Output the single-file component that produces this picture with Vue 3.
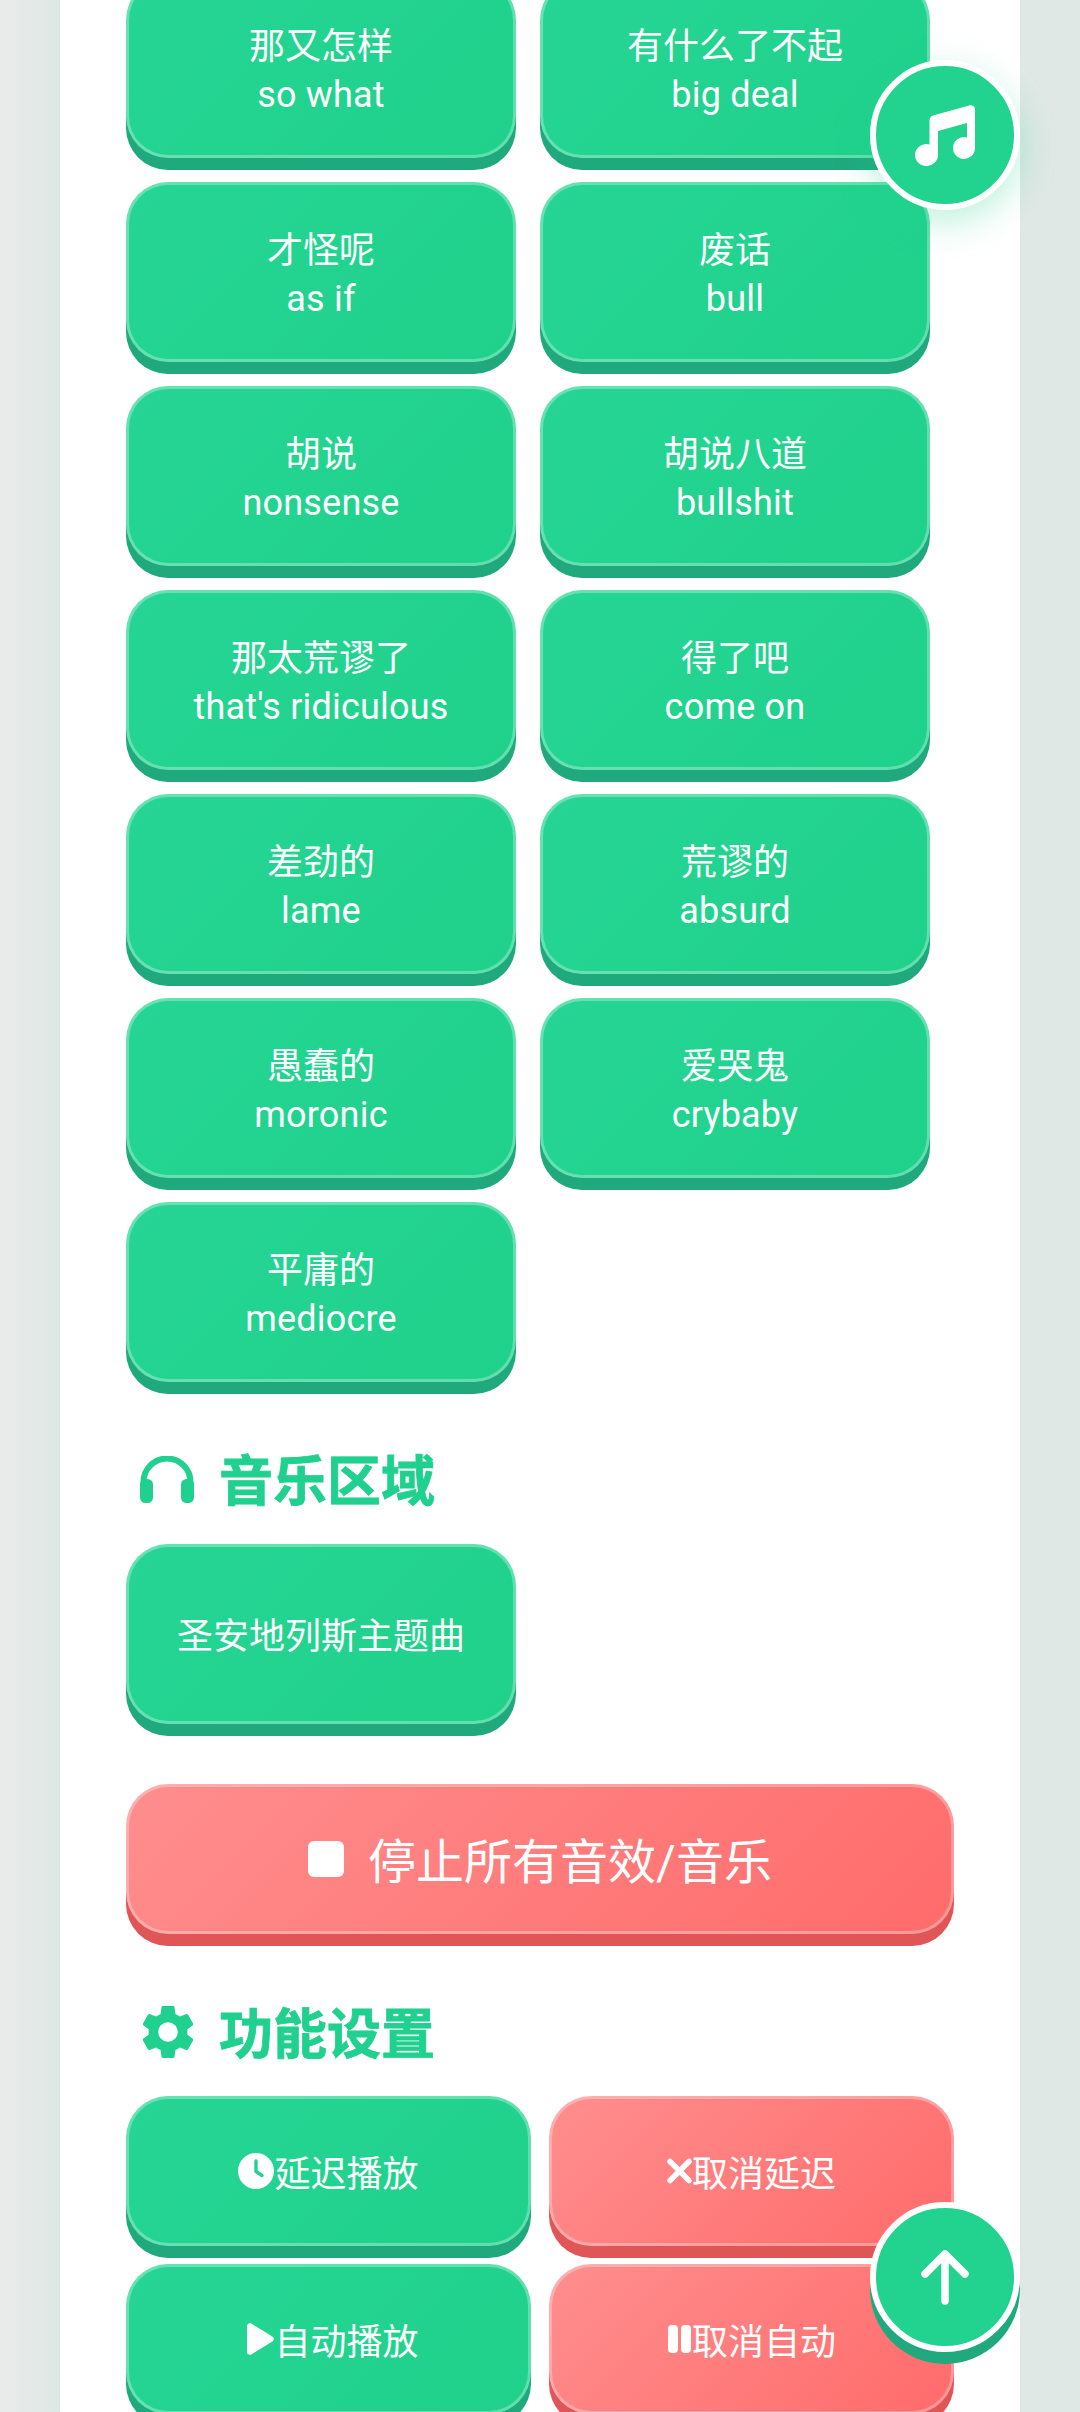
<script setup>
const sounds = [
  ['那又怎样', 'so what'],
  ['有什么了不起', 'big deal'],
  ['才怪呢', 'as if'],
  ['废话', 'bull'],
  ['胡说', 'nonsense'],
  ['胡说八道', 'bullshit'],
  ['那太荒谬了', "that's ridiculous"],
  ['得了吧', 'come on'],
  ['差劲的', 'lame'],
  ['荒谬的', 'absurd'],
  ['愚蠢的', 'moronic'],
  ['爱哭鬼', 'crybaby'],
  ['平庸的', 'mediocre']
]
</script>

<template>
  <div class="page">
    <main class="panel">
      <div class="sound-grid">
        <button v-for="s in sounds" :key="s[1]" class="btn green tall">
          <span>{{ s[0] }}</span>
          <span class="en">{{ s[1] }}</span>
        </button>
      </div>

      <h2 class="heading first">
        <svg class="h-icon" viewBox="0 0 54 47" width="54" height="47" fill="#20d08e">
          <path d="M3.5 32V26a23.5 23.5 0 0 1 47 0v6" fill="none" stroke="#20d08e" stroke-width="6" />
          <rect x="0" y="23" width="13" height="24" rx="5.5" />
          <rect x="41" y="23" width="13" height="24" rx="5.5" />
        </svg>
        <span class="h-text">音乐区域</span>
      </h2>
      <div class="sound-grid">
        <button class="btn green tall"><span>圣安地列斯主题曲</span></button>
      </div>

      <button class="btn red stop">
        <i class="stop-icon"></i>
        <span>停止所有音效/音乐</span>
      </button>

      <h2 class="heading second">
        <svg class="h-icon gear" viewBox="2.5 2 19 20" width="52" height="54" fill="#20d08e">
          <path d="M19.14 12.94c.04-.3.06-.61.06-.94 0-.32-.02-.64-.07-.94l2.03-1.58c.18-.14.23-.41.12-.61l-1.92-3.32c-.12-.22-.37-.29-.59-.22l-2.39.96c-.5-.38-1.03-.7-1.62-.94l-.36-2.54c-.04-.24-.24-.41-.48-.41h-3.84c-.24 0-.43.17-.47.41l-.36 2.54c-.59.24-1.13.57-1.62.94l-2.39-.96c-.22-.08-.47 0-.59.22L2.74 8.87c-.12.21-.08.47.12.61l2.03 1.58c-.05.3-.09.63-.09.94s.02.64.07.94l-2.03 1.58c-.18.14-.23.41-.12.61l1.92 3.32c.12.22.37.29.59.22l2.39-.96c.5.38 1.03.7 1.62.94l.36 2.54c.05.24.24.41.48.41h3.84c.24 0 .44-.17.47-.41l.36-2.54c.59-.24 1.13-.56 1.62-.94l2.39.96c.22.08.47 0 .59-.22l1.92-3.32c.12-.22.07-.47-.12-.61l-2.01-1.58zM12 15.6c-1.98 0-3.6-1.62-3.6-3.6s1.62-3.6 3.6-3.6 3.6 1.62 3.6 3.6-1.62 3.6-3.6 3.6z" />
        </svg>
        <span class="h-text">功能设置</span>
      </h2>
      <div class="settings-grid">
        <button class="btn green setting">
          <svg viewBox="0 0 36 36" width="36" height="36">
            <circle cx="18" cy="18" r="18" fill="#fff" />
            <path d="M18 8v10.5l6 4" fill="none" stroke="#22d28f" stroke-width="3.4" stroke-linecap="round" stroke-linejoin="round" />
          </svg>
          <span>延迟播放</span>
        </button>
        <button class="btn red setting">
          <svg viewBox="0 0 25 36" width="25" height="36">
            <path d="M3 8.500l19 19M22 8.500l-19 19" fill="none" stroke="#fff" stroke-width="5.500" stroke-linecap="round" />
          </svg>
          <span>取消延迟</span>
        </button>
        <button class="btn green setting">
          <svg viewBox="0 0 36 36" width="36" height="36">
            <path d="M9 5c0-2.300 2.400-3.500 4.400-2.400l21 12.800c1.900 1.200 1.900 4 0 5.200l-21 12.800C11.400 34.500 9 33.300 9 31z" fill="#fff" />
          </svg>
          <span>自动播放</span>
        </button>
        <button class="btn red setting">
          <svg viewBox="0 0 25 36" width="25" height="36" fill="#fff">
            <rect x="1" y="4" width="10" height="28" rx="4" />
            <rect x="14" y="4" width="10" height="28" rx="4" />
          </svg>
          <span>取消自动</span>
        </button>
      </div>
    </main>

    <button class="fab music">
      <svg viewBox="0 0 60 61" width="60" height="61" fill="#fff">
        <path d="M14.500 15a5 5 0 0 1 3.500-4.500L55 .3a4 4 0 0 1 5 3.700V43a11 11 0 1 1-8-10.600V18L23 26V50a11.500 11 0 1 1-8.500-10.600z" />
      </svg>
    </button>
    <button class="fab up">
      <svg viewBox="0 0 48 56" width="48" height="56">
        <path d="M24 52V5M4 25L24 5l20 20" fill="none" stroke="#fff" stroke-width="7.500" stroke-linecap="round" stroke-linejoin="round" />
      </svg>
    </button>
  </div>
</template>

<style>
html,
body {
  margin: 0;
  padding: 0;
}
</style>

<style scoped>
.page {
  position: relative;
  width: 1080px;
  height: 2412px;
  overflow: hidden;
  background: linear-gradient(90deg, #e9ebea 0, #dfe8e5 60px);
  font-family: Roboto, "Noto Sans CJK SC", sans-serif;
}

.panel {
  box-sizing: border-box;
  width: 960px;
  margin: -22px 60px 0;
  padding: 0 66px;
  background: #fff;
  min-height: 2500px;
}

.sound-grid {
  display: grid;
  grid-template-columns: repeat(2, 390px);
  gap: 24px;
}

.settings-grid {
  display: grid;
  grid-template-columns: repeat(2, 1fr);
  gap: 18px;
}

.btn {
  box-sizing: border-box;
  display: flex;
  align-items: center;
  justify-content: center;
  margin: 0;
  padding: 0;
  border: 3px solid rgba(255, 255, 255, 0.3);
  border-radius: 42px;
  background-origin: border-box;
  color: #fff;
  font: inherit;
  font-size: 36px;
}

.green {
  background-image: linear-gradient(135deg, #26d595, #1fd18a);
  box-shadow: 0 12px 0 #1fa97d;
}

.red {
  background-image: linear-gradient(135deg, #ff8e8e, #ff6b6b);
  box-shadow: 0 12px 0 #e05555;
}

.tall {
  flex-direction: column;
  height: 180px;
  padding-top: 6px;
  line-height: 48px;
}

.en {
  letter-spacing: 0.2px;
}

.setting {
  height: 150px;
}

.stop {
  gap: 24px;
  width: 100%;
  height: 150px;
  margin-top: 60px;
  padding-bottom: 3px;
  font-size: 48px;
}

.stop-icon {
  display: block;
  width: 36px;
  height: 36px;
  margin-top: 3px;
  border-radius: 6px;
  background: #fff;
}

.heading {
  display: flex;
  align-items: center;
  height: 72px;
  padding-left: 14px;
  margin: 0;
  color: #20d08e;
  font-size: 54px;
  font-weight: 700;
}

.heading.first {
  margin-top: 61px;
  margin-bottom: 29px;
}

.heading.second {
  margin-top: 62px;
  margin-bottom: 28px;
}

.h-icon {
  flex: none;
  margin-right: 25px;
}

.h-icon.gear {
  margin-left: 2px;
  margin-right: 25px;
}

.h-text {
  margin-bottom: 3px;
  -webkit-text-stroke: 0.8px #20d08e;
}

.fab {
  position: absolute;
  right: 60px;
  display: flex;
  align-items: center;
  justify-content: center;
  box-sizing: border-box;
  width: 150px;
  height: 150px;
  margin: 0;
  padding: 0;
  border: 6px solid #fff;
  border-radius: 50%;
  background: #22d28f;
}

.music {
  top: 60px;
  box-shadow: 0 12px 36px rgba(32, 208, 142, 0.3);
}

.up {
  bottom: 60px;
  box-shadow: 0 12px 0 #1fa97d;
}
</style>
